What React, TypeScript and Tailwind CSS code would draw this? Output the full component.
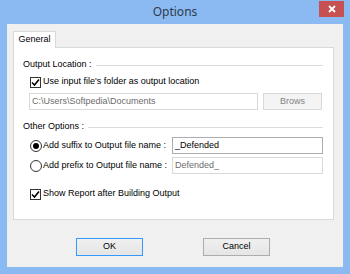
import React from 'react';

function CheckBox({ checked }: { checked: boolean }) {
  return (
    <div className="w-[11px] h-[11px] border border-[#333333] bg-white flex items-center justify-center shrink-0">
      {checked && (
        <svg width="9" height="9" viewBox="0 0 9 9">
          <path d="M1 4.5 L3.5 7 L8 1.5" fill="none" stroke="#000" strokeWidth="1.6" />
        </svg>
      )}
    </div>
  );
}

function Radio({ checked }: { checked: boolean }) {
  return (
    <div className="w-[12px] h-[12px] rounded-full border border-[#333333] bg-white flex items-center justify-center shrink-0">
      {checked && <div className="w-[6px] h-[6px] rounded-full bg-black" />}
    </div>
  );
}

function GroupLabel({ text }: { text: string }) {
  return (
    <div className="h-[14px] flex items-center">
      <span>{text}</span>
      <div className="flex-1 h-px bg-[#dcdcdc] ml-[4px]" />
    </div>
  );
}

export default function App() {
  return (
    <div className="w-[350px] h-[274px] bg-[#8bbaf2] flex flex-col font-['Liberation_Sans',Arial,sans-serif] text-[9px] text-black">
      {/* Title bar */}
      <div className="h-[24px] relative flex items-center justify-center">
        <span className="text-[12px] text-[#2e3b4f] font-['Noto_Sans',sans-serif]">Options</span>
        <button className="absolute right-[6px] top-[1px] w-[25px] h-[16px] bg-[#c75050] flex items-center justify-center">
          <svg width="8" height="8" viewBox="0 0 8 8">
            <path d="M1 1 L7 7 M7 1 L1 7" stroke="#fff" strokeWidth="1.8" />
          </svg>
        </button>
      </div>

      {/* Client */}
      <div className="mx-[7px] mb-[7px] flex-1 bg-[#f0f0f0] flex flex-col pl-[6px] pr-[9px] pt-[7px]">
        <div className="flex">
          <div className="w-[43px] h-[17px] -mb-px relative z-10 bg-white border-t border-l border-r border-[#d9d9d9] flex items-center justify-center">
            General
          </div>
        </div>

        <div className="h-[173px] bg-white border border-[#d9d9d9] pl-[9px] pr-[10px] pt-[10px] flex flex-col">
          <GroupLabel text="Output Location :" />

          <div className="mt-[3px] h-[14px] pl-[7px] flex items-center">
            <CheckBox checked />
            <span className="ml-[2px]">Use input file's folder as output location</span>
          </div>

          <div className="mt-[4px] h-[17px] pl-[6px] flex">
            <div className="w-[229px] h-full border border-[#d9d9d9] bg-white pl-[2px] flex items-center text-[#6d6d6d]">
              C:\Users\Softpedia\Documents
            </div>
            <div className="ml-[5px] w-[59px] h-full border border-[#d9d9d9] bg-[#f4f4f4] flex items-center justify-center text-[#838383]">
              Brows
            </div>
          </div>

          <div className="mt-[10px]">
            <GroupLabel text="Other Options :" />
          </div>

          <div className="mt-[3px] h-[17px] pl-[7px] flex items-center">
            <Radio checked />
            <span className="ml-[1px]">Add suffix to Output file name :</span>
            <div className="ml-auto w-[151px] h-full border border-[#abadb3] bg-white pl-[2px] flex items-center">
              _Defended
            </div>
          </div>

          <div className="mt-[3px] h-[17px] pl-[7px] flex items-center">
            <Radio checked={false} />
            <span className="ml-[1px]">Add prefix to Output file name :</span>
            <div className="ml-auto w-[151px] h-full border border-[#d9d9d9] bg-white pl-[2px] flex items-center text-[#6d6d6d]">
              Defended_
            </div>
          </div>

          <div className="mt-[13px] h-[14px] pl-[7px] flex items-center">
            <CheckBox checked />
            <span className="ml-[2px]">Show Report after Building Output</span>
          </div>
        </div>

        <div className="mt-[18px] flex pl-[63px] gap-[60px]">
          <button className="w-[67px] h-[18px] border border-[#3399ff] bg-gradient-to-b from-[#f0f0f0] to-[#e5e5e5] text-[9px]">
            OK
          </button>
          <button className="w-[67px] h-[18px] border border-[#acacac] bg-gradient-to-b from-[#f0f0f0] to-[#e5e5e5] text-[9px]">
            Cancel
          </button>
        </div>
      </div>
    </div>
  );
}
